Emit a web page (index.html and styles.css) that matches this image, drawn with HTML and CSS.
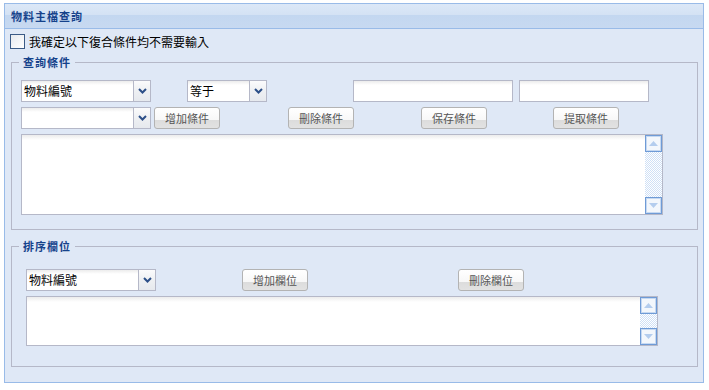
FILE: index.html
```html
<!DOCTYPE html>
<html>
<head>
<meta charset="utf-8">
<link rel="stylesheet" href="styles.css">
</head>
<body>
<div class="panel">
  <div class="panel-header"><span class="panel-title">物料主檔查詢</span></div>
  <div class="panel-body">
    <label class="check-row"><span class="checkbox"></span><span class="check-label">我確定以下復合條件均不需要輸入</span></label>

    <fieldset class="fs fs-query">
      <legend>查詢條件</legend>
      <div class="fs-content">
        <div class="row">
          <div class="combo combo-130"><span class="combo-text">物料編號</span><span class="trigger"><svg width="9" height="6" viewBox="0 0 9 6"><path d="M1 1 L4.5 4.5 L8 1" fill="none" stroke="#2c4f88" stroke-width="2"/></svg></span></div>
          <div class="combo combo-80 gap-36"><span class="combo-text">等于</span><span class="trigger"><svg width="9" height="6" viewBox="0 0 9 6"><path d="M1 1 L4.5 4.5 L8 1" fill="none" stroke="#2c4f88" stroke-width="2"/></svg></span></div>
          <div class="textfield tf-160 gap-86"></div>
          <div class="textfield tf-130 gap-6"></div>
        </div>
        <div class="row">
          <div class="combo combo-130"><span class="combo-text"></span><span class="trigger"><svg width="9" height="6" viewBox="0 0 9 6"><path d="M1 1 L4.5 4.5 L8 1" fill="none" stroke="#2c4f88" stroke-width="2"/></svg></span></div>
          <button class="btn gap-3">增加條件</button>
          <button class="btn gap-68">刪除條件</button>
          <button class="btn gap-67">保存條件</button>
          <button class="btn gap-66">提取條件</button>
        </div>
        <div class="textarea ta-query">
          <div class="ta-text"></div>
          <div class="scrollbar">
            <div class="sb-btn"><svg width="9" height="5" viewBox="0 0 9 5"><path d="M0 5 L4.5 0 L9 5 Z" fill="#b4cdee"/></svg></div>
            <div class="sb-track"></div>
            <div class="sb-btn"><svg width="9" height="5" viewBox="0 0 9 5"><path d="M0 0 L4.5 5 L9 0 Z" fill="#b4cdee"/></svg></div>
          </div>
        </div>
      </div>
    </fieldset>

    <fieldset class="fs fs-sort">
      <legend>排序欄位</legend>
      <div class="fs-content">
        <div class="row">
          <div class="combo combo-130"><span class="combo-text">物料編號</span><span class="trigger"><svg width="9" height="6" viewBox="0 0 9 6"><path d="M1 1 L4.5 4.5 L8 1" fill="none" stroke="#2c4f88" stroke-width="2"/></svg></span></div>
          <button class="btn gap-86">增加欄位</button>
          <button class="btn gap-150">刪除欄位</button>
        </div>
        <div class="textarea ta-sort">
          <div class="ta-text"></div>
          <div class="scrollbar">
            <div class="sb-btn"><svg width="9" height="5" viewBox="0 0 9 5"><path d="M0 5 L4.5 0 L9 5 Z" fill="#b4cdee"/></svg></div>
            <div class="sb-track"></div>
            <div class="sb-btn"><svg width="9" height="5" viewBox="0 0 9 5"><path d="M0 0 L4.5 5 L9 0 Z" fill="#b4cdee"/></svg></div>
          </div>
        </div>
      </div>
    </fieldset>
  </div>
</div>
</body>
</html>
```

FILE: styles.css
```css
* { box-sizing: border-box; }

html, body {
  margin: 0;
  padding: 0;
  background: #ffffff;
}

body {
  font-family: "Noto Sans CJK TC", "Liberation Sans", sans-serif;
  font-size: 12px;
  color: #000;
}

.panel {
  margin: 3px 0 0 4px;
  width: 700px;
  border: 1px solid #99bbe8;
}

.panel-header {
  height: 25px;
  border-bottom: 1px solid #99bbe8;
  background: linear-gradient(#dce8f7 0, #d4e2f4 44%, #c3d7f0 45%, #c7d9f1 100%);
  padding-left: 6px;
  display: flex;
  align-items: center;
}

.panel-title {
  font-size: 11px;
  font-weight: bold;
  color: #15428b;
  letter-spacing: 1px;
  line-height: 14px;
}

.panel-body {
  background: #dfe8f6;
  padding: 5px 5px 15px 6px;
}

.check-row {
  display: flex;
  align-items: flex-start;
  height: 21px;
  margin-left: -1px;
}

.checkbox {
  width: 15px;
  height: 15px;
  border: 1px solid #3a5a86;
  background: linear-gradient(135deg, #e6e9ee 0, #ffffff 100%);
}

.check-label {
  margin-left: 4px;
  line-height: 15px;
  font-size: 12px;
}

.fs {
  margin: 0;
  border: 1px solid #b5b8c8;
  padding: 11px 7px 14px 7px;
  min-width: 0;
}

.fs legend {
  font-size: 11px;
  font-weight: bold;
  color: #15428b;
  letter-spacing: 1px;
  line-height: 14px;
  padding: 0 4px 0 4px;
}

.fs-query .fs-content { padding-left: 2px; }

.fs-sort {
  margin-top: 9px;
  padding-top: 16px;
  padding-bottom: 20px;
}

.fs-sort .fs-content { padding-left: 7px; }

.row {
  display: flex;
  align-items: flex-start;
  height: 22px;
  margin-bottom: 5px;
}

.gap-3 { margin-left: 3px; }
.gap-6 { margin-left: 6px; }
.gap-36 { margin-left: 36px; }
.gap-66 { margin-left: 66px; }
.gap-67 { margin-left: 67px; }
.gap-68 { margin-left: 68px; }
.gap-86 { margin-left: 86px; }
.gap-150 { margin-left: 150px; }

.combo {
  display: flex;
  height: 22px;
  border: 1px solid #b5b8c8;
  background: #fff;
}

.combo-130 { width: 130px; }
.combo-80 { width: 80px; }

.combo-text {
  flex: 1;
  padding-left: 2px;
  line-height: 20px;
  font-size: 12px;
  background: linear-gradient(#ececec 0, #ffffff 4px);
}

.trigger {
  width: 17px;
  border-left: 1px solid #b5b8c8;
  background: linear-gradient(#fbfbfc 0, #eef0f3 50%, #e6e9ee 100%);
  display: flex;
  align-items: center;
  justify-content: center;
}

.textfield {
  height: 22px;
  border: 1px solid #b5b8c8;
  background: linear-gradient(#ececec 0, #ffffff 4px);
}

.tf-160 { width: 160px; }
.tf-130 { width: 130px; }

.btn {
  width: 66px;
  height: 22px;
  margin-top: 0;
  margin-bottom: 0;
  margin-right: 0;
  padding: 0;
  border: 1px solid #b3b3b3;
  border-radius: 3px;
  background: linear-gradient(#ffffff 0, #f8f8f8 58%, #dcdcdc 59%, #e2e2e2 100%);
  font-family: "Noto Sans CJK TC", "Liberation Sans", sans-serif;
  font-size: 11px;
  letter-spacing: 0;
  color: #555;
  line-height: 18px;
}

.textarea {
  display: flex;
  border: 1px solid #b5b8c8;
  background: linear-gradient(#ececec 0, #ffffff 5px);
}

.ta-query { width: 642px; height: 81px; }
.ta-sort { width: 632px; height: 50px; }

.ta-text { flex: 1; }

.scrollbar {
  width: 17px;
  display: flex;
  flex-direction: column;
}

.sb-btn {
  height: 17px;
  border: 1px solid #6f9bd6;
  box-shadow: inset 0 0 0 1px #c6d9f2;
  background: #f3f7fc;
  display: flex;
  align-items: center;
  justify-content: center;
}

.sb-track {
  flex: 1;
  background-color: #ffffff;
  background-image: repeating-conic-gradient(#cfe0f6 0 25%, #ffffff 0 50%);
  background-size: 2px 2px;
}
```
